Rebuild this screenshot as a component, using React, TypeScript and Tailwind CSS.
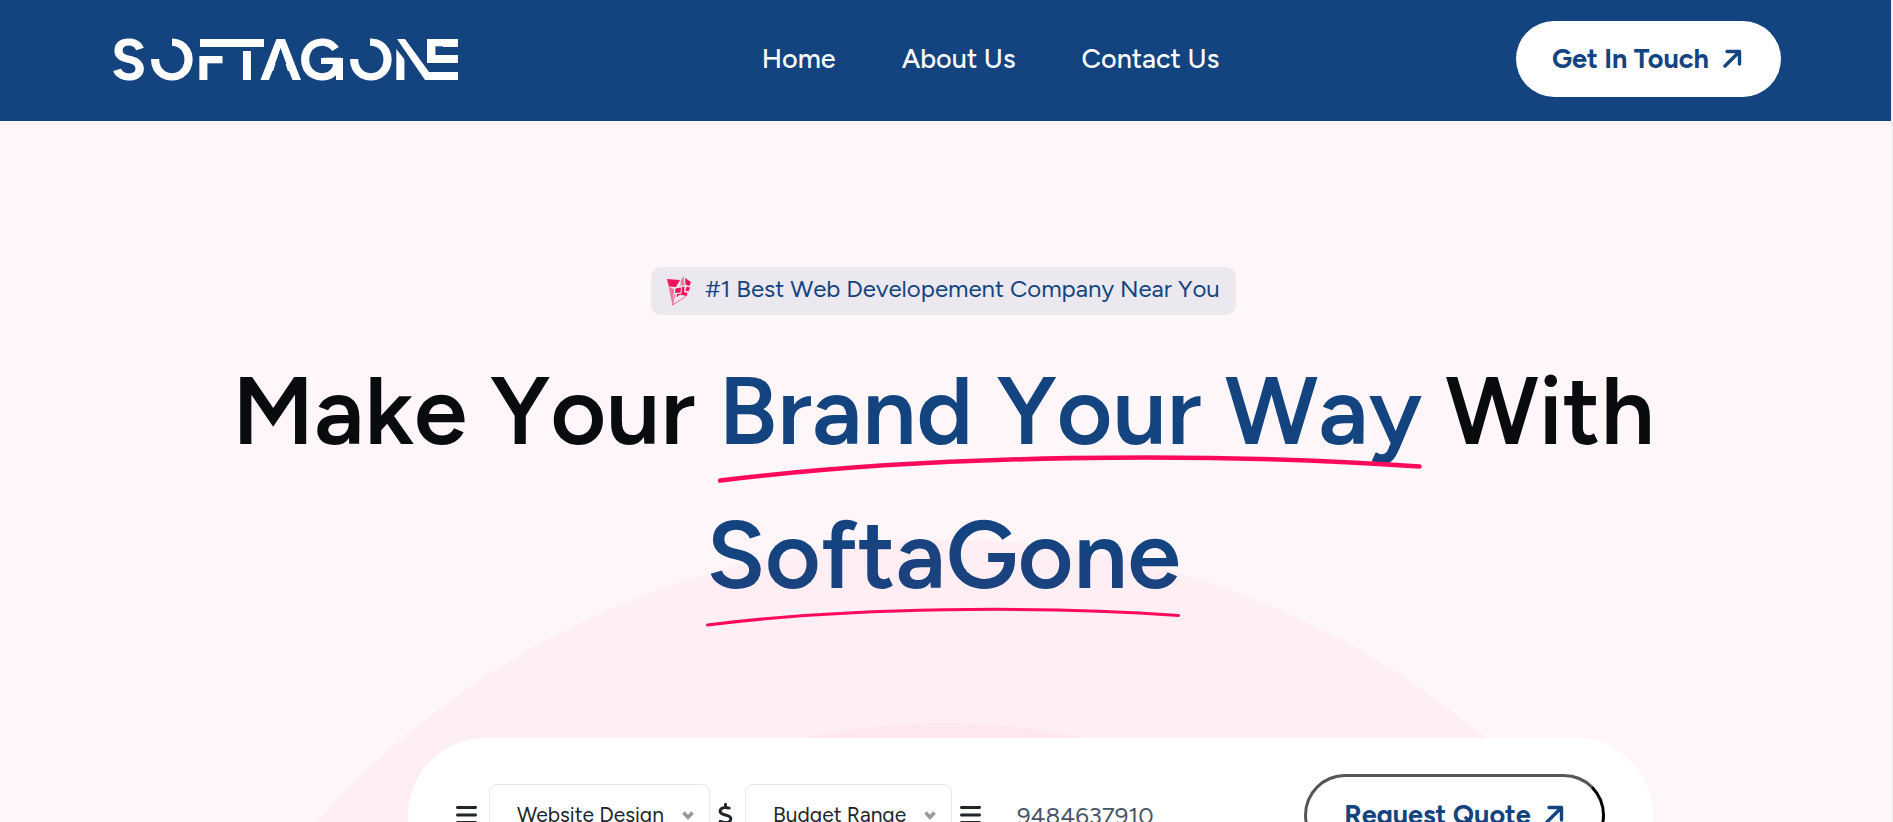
import React, { useState } from 'react';
import { FaBars, FaDollarSign } from 'react-icons/fa6';

const navLinks = ['Home', 'About Us', 'Contact Us'];
const services = ['Website Design', 'App Development', 'SEO'];
const budgets = ['Budget Range', '$500 - $1000', '$1000 - $5000'];

function Logo() {
  return (
    <svg viewBox="-4 -18 354 78" className="-mx-1 w-[354px] h-[78px]" role="img" aria-label="Softagone">
      <defs>
        <mask id="logo-cuts" maskUnits="userSpaceOnUse" x="-4" y="-18" width="354" height="78">
          <rect x="-4" y="-18" width="354" height="78" fill="white" />
          {/* open quarter of both O's */}
          <rect x="36" y="-2" width="23" height="23" fill="black" />
          <rect x="233" y="-2" width="24" height="23" fill="black" />
          {/* gap under the shared F/T bar */}
          <rect x="84" y="-2" width="32" height="20" fill="black" />
          <rect x="116" y="-2" width="34" height="15" fill="black" />
          {/* crossbar of the A */}
          <path d="M167.500 10 L157 43 H178 Z" fill="black" />
          {/* only the left stem of the N stays */}
          <path d="M281 -2 V8 L292 22 V45 H314 V-2 Z" fill="black" />
          <rect x="312" y="25" width="34" height="20" fill="black" />
        </mask>
      </defs>
      <text
        x="-2 36 82 117 147 186 235 279 310"
        y="42"
        mask="url(#logo-cuts)"
        fill="white"
        fontFamily="Figtree, Inter, sans-serif"
        fontSize="58"
        fontWeight="700"
      >
        SOFTAGONE
      </text>
      <g fill="white">
        <rect x="87" y="1" width="64" height="8" />
        <rect x="330" y="1" width="15" height="8" />
        <rect x="322" y="17" width="23" height="8" />
        {/* spur of the G */}
        <path d="M208 20 H230 V42 H223 V26 H208 Z" />
        <path d="M284 1 H292 L316 34 H345 V42 H312 Z" />
      </g>
    </svg>
  );
}

function ArrowUpRight() {
  return (
    <svg viewBox="0 0 20 20" className="w-5 h-5 shrink-0" fill="none" stroke="currentColor" strokeWidth="3.4" strokeLinecap="round" strokeLinejoin="round" aria-hidden="true">
      <path d="M4 2.500 H16.500 V15 M16 3 L2 17" />
    </svg>
  );
}

function BadgeIcon() {
  return (
    <svg viewBox="0 0 24 30" className="w-6 h-[30px] shrink-0" aria-hidden="true">
      <path d="M0 3 L13 4 L9 11 L2 10.500 Z" fill="#f5105a" />
      <path d="M0 3 L5.500 29 L7 13 L2 11 Z" fill="#f5105a" opacity=".55" />
      <path d="M14 4 L16.500 0 L17.500 9 L13.500 10 Z" fill="#f5105a" opacity=".5" />
      <path d="M18 2 L24 6 L22.500 10 L18.500 8.500 Z M8.500 12.500 L14 11.500 L13.500 16.500 L8 17 Z M19.500 10.500 L23 11.500 L21.500 15.500 L18.500 14.500 Z M15 11 L17.500 10.500 L17 16 L20.500 17 L19.500 20 L13 18.500 L9.500 21.500 L10 18 L14.500 17.500 Z" fill="#f5105a" />
      <path d="M8 18 L5.500 29 M5.500 29 L19 20.500" stroke="#f5105a" strokeOpacity=".6" fill="none" />
    </svg>
  );
}

function Underline() {
  return (
    <svg
      viewBox="0 0 700 26"
      className="absolute inset-x-0 bottom-0 w-full h-auto overflow-visible"
      fill="none"
      stroke="#ff0a5b"
      strokeWidth="4.5"
      strokeLinecap="round"
      aria-hidden="true"
    >
      <path d="M2 23.500 C 215 -3, 490 -5, 698 9.500" />
    </svg>
  );
}

function SelectBox({ label, options, className }: { label: string; options: string[]; className: string }) {
  return (
    <div className={`relative ${className}`}>
      <select
        aria-label={label}
        className="appearance-none w-full h-[62px] pl-[27px] pr-8 rounded-lg border border-[#e8e8e8] bg-white text-[21px] text-[#212529] outline-none"
      >
        {options.map((option) => (
          <option key={option}>{option}</option>
        ))}
      </select>
      <svg viewBox="0 0 12 10" className="absolute right-4 top-1/2 -mt-1 w-3 h-[10px] pointer-events-none" fill="none" stroke="#999" strokeWidth="3.5" aria-hidden="true">
        <path d="M1.500 1.500 L6 6.500 L10.500 1.500" />
      </svg>
    </div>
  );
}

export default function App() {
  const [phone, setPhone] = useState('9484637910');

  return (
    <div className="h-screen overflow-hidden border-r-2 border-[#f1f1f1] bg-[#fff6f9] font-['Figtree','Lato',sans-serif]">
      {/* Header */}
      <header className="flex items-center justify-between h-[121px] bg-[#134480] pl-[113px] pr-[110px] pb-[3px]">
        <a href="#" className="shrink-0">
          <Logo />
        </a>
        <nav className="flex items-center gap-[66px] ml-1.5 text-[27px] leading-10 font-medium text-white">
          {navLinks.map((link) => (
            <a key={link} href="#">{link}</a>
          ))}
        </nav>
        <a
          href="#"
          className="flex items-center justify-center gap-3.5 h-[76px] pl-9 pr-[38px] rounded-full bg-white text-[27px] font-bold text-[#134480]"
        >
          Get In Touch
          <ArrowUpRight />
        </a>
      </header>

      {/* Hero */}
      <section className="relative mr-1 px-28 pt-[146px]">
        <div className="flex flex-col items-center text-center">
          <p className="flex items-center gap-3.5 h-12 px-4 rounded-[10px] bg-[#ebe8ef] text-2xl text-[#134480] [font-kerning:none]">
            <BadgeIcon />
            <span className="pb-1">#1 Best Web Developement Company Near You</span>
          </p>
          <h1 className="mt-6 text-8xl leading-[144px] font-semibold text-[#090b0e] [font-kerning:none]">
            Make Your{' '}
            <span className="relative inline-block text-[#134480]">
              Brand Your Way
              <Underline />
            </span>{' '}
            With
            <br />
            <span className="relative inline-block text-[#134480]">
              SoftaGone
              <Underline />
            </span>
          </h1>
        </div>

        {/* Background rings */}
        <div className="absolute left-1/2 top-[419px] -translate-x-1/2 size-[1676px] rounded-full bg-[#ff0060]/3 pointer-events-none flex items-center justify-center">
          <div className="size-[1310px] rounded-full bg-[#ff0060]/3" />
        </div>

        {/* Quote form */}
        <form className="relative mt-[111px] ml-[296px] mr-[122px] flex items-center h-[154px] px-12 rounded-[81px] bg-white" onSubmit={(e) => e.preventDefault()}>
          <FaBars className="w-[21px] h-6 shrink-0 text-[#212529]" />
          <SelectBox label="Service" options={services} className="ml-3 w-[221px]" />
          <FaDollarSign className="w-[15px] h-6 mx-2 shrink-0 text-[#212529]" />
          <SelectBox label="Budget" options={budgets} className="ml-1 w-[207px]" />
          <FaBars className="w-[21px] h-6 ml-2 shrink-0 text-[#212529]" />
          <input
            type="tel"
            aria-label="Phone number"
            value={phone}
            onChange={(e) => setPhone(e.target.value)}
            className="flex-1 min-w-0 h-[62px] pl-9 text-2xl text-[#475569] outline-none"
          />
          <button
            type="submit"
            className="flex items-center justify-center gap-3.5 w-[301px] h-[82px] rounded-full border-[3px] border-t-[#555] border-l-[#555] border-r-black border-b-black bg-white text-[27px] font-bold text-[#134480]"
          >
            Request Quote
            <ArrowUpRight />
          </button>
        </form>
      </section>
    </div>
  );
}
